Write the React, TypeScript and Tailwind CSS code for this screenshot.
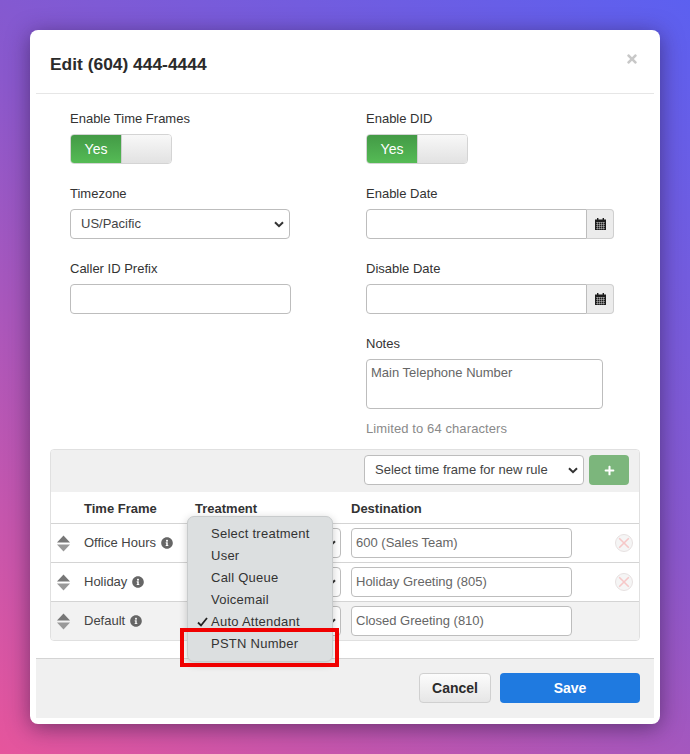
import React from "react";
import { FaInfoCircle, FaPlus, FaTimes } from "react-icons/fa";

const Chevron = () => (
  <svg width="10" height="7" viewBox="0 0 10 7" className="shrink-0">
    <path d="M1 1.2 L5 5.2 L9 1.2" fill="none" stroke="#333" strokeWidth="2" />
  </svg>
);

const Label = ({ children }: { children: React.ReactNode }) => (
  <div className="h-[20px] leading-[20px] text-[#333]">{children}</div>
);

const Toggle = () => (
  <div className="mt-[5px] flex h-[30px] w-[102px] rounded-[4px] border border-[#d4d4d4] overflow-hidden">
    <div className="flex w-[50px] items-center justify-center bg-gradient-to-b from-[#439a46] to-[#55bb55] text-[14px] text-white">Yes</div>
    <div className="flex-1 bg-gradient-to-b from-[#f8f8f8] to-[#e2e2e2] border-l border-[#cfcfcf]" />
  </div>
);

const Calendar = () => (
  <svg width="11" height="12" viewBox="0 0 11 12" className="shrink-0">
    <rect x="0" y="1.5" width="11" height="10.5" fill="#1c1c1c" />
    <rect x="2" y="0" width="1.4" height="2.5" fill="#1c1c1c" />
    <rect x="7.6" y="0" width="1.4" height="2.5" fill="#1c1c1c" />
    <path d="M1 4.5 H10 M1 6.5 H10 M1 8.5 H10 M1 10.5 H10" stroke="#ececec" strokeWidth="0.4" />
    <path d="M2.5 4 V11.5 M4.5 4 V11.5 M6.5 4 V11.5 M8.5 4 V11.5" stroke="#ececec" strokeWidth="0.4" />
  </svg>
);

const DateField = () => (
  <div className="mt-[5px] flex h-[30px] w-[248px]">
    <div className="h-full w-[221px] rounded-l-[4px] border border-[#bdbdbd] bg-white" />
    <div className="flex h-full flex-1 items-center justify-center rounded-r-[4px] border border-l-0 border-[#cfcfcf] bg-[#ececec]">
      <Calendar />
    </div>
  </div>
);

const Sort = () => (
  <svg width="13" height="17" viewBox="0 0 13 17" className="shrink-0">
    <path d="M6.5 0.5 L13 7.5 L0 7.5 Z" fill="#777" />
    <path d="M0 9.5 L13 9.5 L6.5 16.5 Z" fill="#999" />
  </svg>
);

const Remove = () => (
  <svg width="18" height="18" viewBox="0 0 18 18">
    <circle cx="9" cy="9" r="8.5" fill="#f5f5f5" stroke="#e6e0e0" />
    <path d="M4.2 4.2 L13.8 13.8 M13.8 4.2 L4.2 13.8" stroke="#f6c8c8" strokeWidth="1.6" />
  </svg>
);

const Check = () => (
  <svg width="11" height="10" viewBox="0 0 11 10" className="shrink-0">
    <path d="M1 5.5 L4 8.5 L10 1" fill="none" stroke="#222" strokeWidth="1.8" />
  </svg>
);

const Row = ({ name, dest, remove, shaded }: { name: string; dest: string; remove?: boolean; shaded?: boolean }) => (
  <div className={`flex h-[39px] items-center border-t border-[#d4d4d4] ${shaded ? "bg-[#f2f2f2]" : "bg-white"}`}>
    <div className="ml-[6px] w-[27px]"><Sort /></div>
    <div className="flex w-[111px] items-center gap-[5px] text-[#444]">
      {name}
      <FaInfoCircle className="text-[12px] text-[#666]" />
    </div>
    <div className="flex h-[30px] w-[146px] items-center justify-end rounded-[4px] border border-[#bdbdbd] bg-white pr-[4px]">
      <Chevron />
    </div>
    <div className="ml-[10px] flex h-[30px] w-[221px] items-center rounded-[4px] border border-[#bdbdbd] bg-white pl-[4px] text-[#666]">
      {dest}
    </div>
    <div className="ml-[43px] flex w-[18px] items-center">{remove ? <Remove /> : null}</div>
  </div>
);

const items = ["Select treatment", "User", "Call Queue", "Voicemail", "Auto Attendant", "PSTN Number"];

export default function App() {
  return (
    <div
      className="flex h-[754px] w-[690px] items-start justify-center overflow-hidden pt-[30px] text-[13px] bg-[linear-gradient(215deg,#5c60f0_0%,#8a58cc_45%,#e6559c_100%)]"
      style={{ fontFamily: '"Liberation Sans", Arial, sans-serif' }}
    >
      <div className="relative h-[694px] w-[630px] rounded-[8px] bg-white px-[6px] shadow-[0_4px_22px_rgba(40,20,60,0.55)]">
        <div className="flex h-[64px] items-start justify-between border-b border-[#e6e6e6] pl-[14px] pr-[15px]">
          <h1 className="mt-[24px] text-[17.4px] leading-[20px] font-bold text-[#2b2b2b]">Edit (604) 444-4444</h1>
          <FaTimes className="mt-[22px] text-[14px] text-[#c8c8c8]" />
        </div>

        <div className="grid grid-cols-[296px_1fr] pl-[34px] pt-[15px]">
          <div>
            <Label>Enable Time Frames</Label>
            <Toggle />
            <div className="mt-[20px]"><Label>Timezone</Label></div>
            <div className="mt-[5px] flex h-[30px] w-[220px] items-center justify-between rounded-[4px] border border-[#bdbdbd] bg-white pl-[10px] pr-[5px] text-[#444]">
              US/Pacific
              <Chevron />
            </div>
            <div className="mt-[20px]"><Label>Caller ID Prefix</Label></div>
            <div className="mt-[5px] h-[30px] w-[221px] rounded-[4px] border border-[#bdbdbd] bg-white" />
          </div>
          <div>
            <Label>Enable DID</Label>
            <Toggle />
            <div className="mt-[20px]"><Label>Enable Date</Label></div>
            <DateField />
            <div className="mt-[20px]"><Label>Disable Date</Label></div>
            <DateField />
            <div className="mt-[20px]"><Label>Notes</Label></div>
            <div className="mt-[5px] h-[50px] w-[237px] rounded-[4px] border border-[#bdbdbd] bg-white pl-[4px] pt-[5px] leading-[15px] text-[#666]">
              Main Telephone Number
            </div>
            <div className="mt-[10px] h-[20px] leading-[20px] tracking-[0.1px] text-[#8a8a8a]">Limited to 64 characters</div>
          </div>
        </div>

        <div className="mx-[14px] mt-[10px] rounded-[4px] border border-[#e0e0e0] overflow-hidden">
          <div className="flex h-[42px] items-start justify-end gap-[5px] bg-[#f0f0f0] pr-[10px] pt-[5px]">
            <div className="flex h-[30px] w-[220px] items-center justify-between rounded-[4px] border border-[#bdbdbd] bg-white pl-[10px] pr-[5px] text-[#444]">
              Select time frame for new rule
              <Chevron />
            </div>
            <div className="flex h-[30px] w-[40px] items-center justify-center rounded-[4px] bg-[#7cb67c] text-white">
              <FaPlus className="text-[11px]" />
            </div>
          </div>
          <div className="flex h-[31px] items-center bg-white pt-[2px] font-bold text-[#333]">
            <div className="ml-[33px] w-[111px]">Time Frame</div>
            <div className="w-[156px]">Treatment</div>
            <div>Destination</div>
          </div>
          <Row name="Office Hours" dest="600 (Sales Team)" remove />
          <Row name="Holiday" dest="Holiday Greeting (805)" remove />
          <Row name="Default" dest="Closed Greeting (810)" shaded />
        </div>

        <div className="mt-[17px] flex h-[60px] items-center justify-end gap-[9px] border-t border-[#d4d4d4] bg-[#f0f0f0] pr-[14px] pb-[1px]">
          <button className="h-[30px] w-[72px] rounded-[4px] border border-[#d0d0d0] bg-gradient-to-b from-[#fcfcfc] to-[#e6e6e6] font-bold text-[14px] text-[#2b2b2b]">Cancel</button>
          <button className="h-[30px] w-[140px] rounded-[4px] bg-[#1f7ae0] font-bold text-[14px] text-white">Save</button>
        </div>

        <div className="absolute left-[157px] top-[486px] w-[146px] rounded-[7px] border border-[#c8cbcc] bg-[#dcdfe0] py-[6px] tracking-[0.25px] shadow-[0_2px_8px_rgba(0,0,0,0.2)] text-[#333]">
          {items.map((t) => (
            <div key={t} className="flex h-[22px] items-center">
              <div className="flex w-[23px] justify-end pr-[3px]">
                {t === "Auto Attendant" ? <Check /> : null}
              </div>
              {t}
            </div>
          ))}
        </div>
        <div className="absolute left-[150px] top-[598px] h-[39px] w-[159px] border-[4px] border-[#f00000]" />
      </div>
    </div>
  );
}
